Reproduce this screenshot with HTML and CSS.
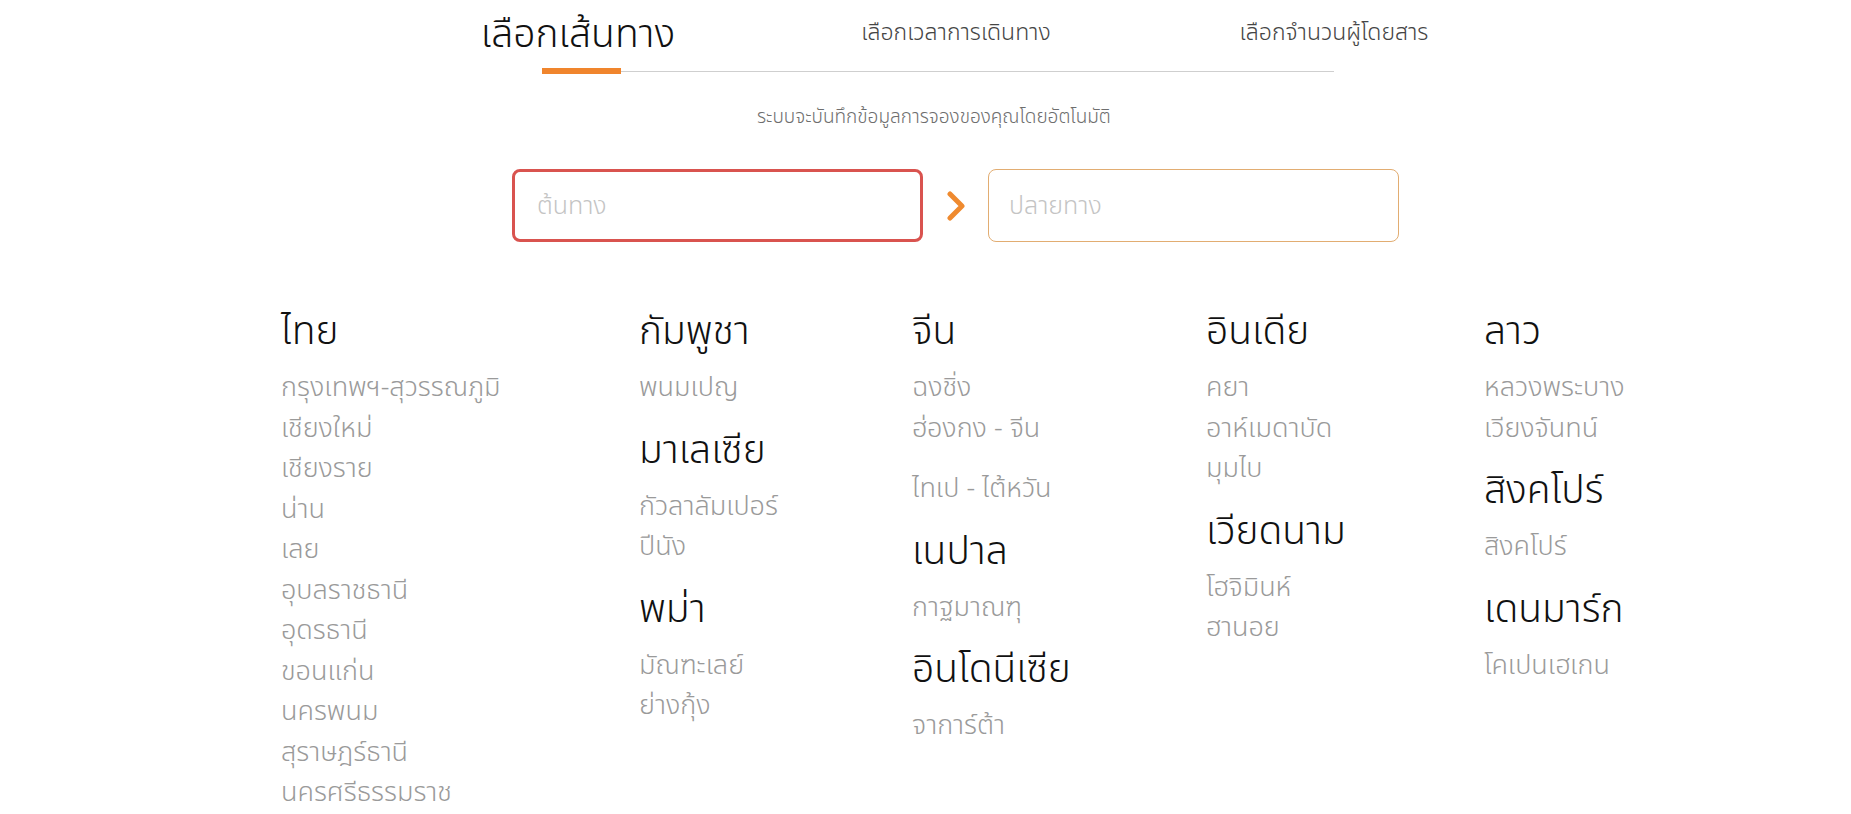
FILE: index.html
```html
<!DOCTYPE html>
<html lang="th">
<head>
<meta charset="utf-8">
<title>เลือกเส้นทาง</title>
<link rel="stylesheet" href="styles.css">
</head>
<body>
<div class="page">
  <div class="stepper">
    <div class="tabs">
      <div class="tab active">เลือกเส้นทาง</div>
      <div class="tab">เลือกเวลาการเดินทาง</div>
      <div class="tab">เลือกจำนวนผู้โดยสาร</div>
    </div>
    <div class="progress">
      <div class="progress-done"></div>
      <div class="progress-rest"></div>
    </div>
  </div>
  <p class="note">ระบบจะบันทึกข้อมูลการจองของคุณโดยอัตโนมัติ</p>
  <div class="route">
    <div class="field field-error"><span class="placeholder">ต้นทาง</span></div>
    <svg class="chevron" width="18" height="30" viewBox="0 0 18 30"><path d="M3 3 L15 15 L3 27" fill="none" stroke="#ef8a2f" stroke-width="5" stroke-linecap="round" stroke-linejoin="round"/></svg>
    <div class="field field-dest"><span class="placeholder">ปลายทาง</span></div>
  </div>
  <div class="countries">
    <div class="col">
      <div class="group">
        <h2 class="country">ไทย</h2>
        <ul class="cities">
          <li>กรุงเทพฯ-สุวรรณภูมิ</li>
          <li>เชียงใหม่</li>
          <li>เชียงราย</li>
          <li>น่าน</li>
          <li>เลย</li>
          <li>อุบลราชธานี</li>
          <li>อุดรธานี</li>
          <li>ขอนแก่น</li>
          <li>นครพนม</li>
          <li>สุราษฎร์ธานี</li>
          <li>นครศรีธรรมราช</li>
        </ul>
      </div>
    </div>
    <div class="col">
      <div class="group">
        <h2 class="country">กัมพูชา</h2>
        <ul class="cities"><li>พนมเปญ</li></ul>
      </div>
      <div class="group">
        <h2 class="country">มาเลเซีย</h2>
        <ul class="cities"><li>กัวลาลัมเปอร์</li><li>ปีนัง</li></ul>
      </div>
      <div class="group">
        <h2 class="country">พม่า</h2>
        <ul class="cities"><li>มัณฑะเลย์</li><li>ย่างกุ้ง</li></ul>
      </div>
    </div>
    <div class="col">
      <div class="group">
        <h2 class="country">จีน</h2>
        <ul class="cities"><li>ฉงชิ่ง</li><li class="spaced">ฮ่องกง - จีน</li><li>ไทเป - ไต้หวัน</li></ul>
      </div>
      <div class="group">
        <h2 class="country">เนปาล</h2>
        <ul class="cities"><li>กาฐมาณฑุ</li></ul>
      </div>
      <div class="group">
        <h2 class="country">อินโดนีเซีย</h2>
        <ul class="cities"><li>จาการ์ต้า</li></ul>
      </div>
    </div>
    <div class="col">
      <div class="group">
        <h2 class="country">อินเดีย</h2>
        <ul class="cities"><li>คยา</li><li>อาห์เมดาบัด</li><li>มุมไบ</li></ul>
      </div>
      <div class="group">
        <h2 class="country">เวียดนาม</h2>
        <ul class="cities"><li>โฮจิมินห์</li><li>ฮานอย</li></ul>
      </div>
    </div>
    <div class="col">
      <div class="group">
        <h2 class="country">ลาว</h2>
        <ul class="cities"><li>หลวงพระบาง</li><li>เวียงจันทน์</li></ul>
      </div>
      <div class="group">
        <h2 class="country">สิงคโปร์</h2>
        <ul class="cities"><li>สิงคโปร์</li></ul>
      </div>
      <div class="group">
        <h2 class="country">เดนมาร์ก</h2>
        <ul class="cities"><li>โคเปนเฮเกน</li></ul>
      </div>
    </div>
  </div>
</div>
</body>
</html>
```

FILE: styles.css
```css
* { box-sizing: border-box; }
html, body { margin: 0; padding: 0; background: #ffffff; }
body {
  font-family: "Noto Sans Thai", "Noto Sans", "DejaVu Sans", sans-serif;
  font-weight: 300;
  color: #111111;
  width: 1851px;
  height: 814px;
  overflow: hidden;
}
.page { display: flex; flex-direction: column; }

.stepper { margin-left: 389px; width: 1134px; }
.tabs { display: flex; height: 67px; }
.tab {
  width: 378px;
  text-align: center;
  font-size: 23px;
  color: #454545;
  line-height: 64px;
  padding-top: 1px;
}
.tab.active { font-size: 39px; color: #111111; line-height: 66px; padding-top: 3px; }
.progress { display: flex; align-items: center; margin-left: 153px; width: 792px; height: 8px; }
.progress-done { width: 79px; height: 6px; background: #f0852d; }
.progress-rest { flex: 1; height: 1px; background: #cfcfcf; }

.note {
  margin: 31px 0 0 0;
  padding-left: 757px;
  font-size: 19px;
  line-height: 24px;
  color: #6e6e6e;
}

.route { display: flex; align-items: center; margin: 39px 0 0 512px; }
.field {
  width: 411px;
  height: 73px;
  border-radius: 8px;
  display: flex;
  align-items: center;
  padding-left: 22px;
}
.field-error { border: 3px solid #d9534f; }
.field-dest { border: 1px solid #e2ad72; padding-left: 20px; }
.placeholder { font-size: 25px; color: #c4c4c4; }
.chevron { margin: 0 23px 0 24px; }

.countries {
  display: grid;
  grid-template-columns: 358px 273px 294px 278px auto;
  margin: 68px 0 0 281px;
}
.group { margin-bottom: 20px; }
.country {
  margin: 0 0 12px 0;
  font-size: 39px;
  font-weight: 300;
  line-height: 46px;
  color: #111111;
}
.cities { list-style: none; margin: 0; padding: 0; }
.cities li { font-size: 27px; line-height: 40.5px; color: #9a9a9a; }
.cities li.spaced { margin-bottom: 20px; }
```
